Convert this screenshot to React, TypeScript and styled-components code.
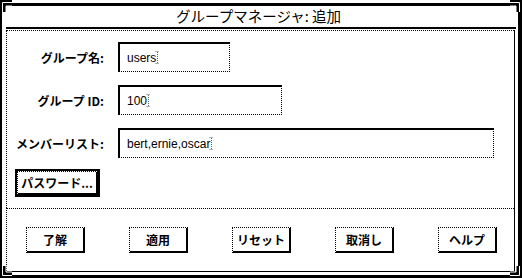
import React from 'react';
import styled, { createGlobalStyle } from 'styled-components';

const GlobalStyle = createGlobalStyle`
  html, body {
    margin: 0;
    padding: 0;
    background: #ffffff;
  }
  body {
    font-family: "Noto Sans CJK JP", "Liberation Sans", sans-serif;
    color: #000000;
  }
`;

const Window = styled.div`
  position: relative;
  width: 522px;
  height: 278px;
  box-sizing: border-box;
  padding-top: 3px;
  background: #ffffff;
`;

const Frame = styled.div`
  height: 100%;
  box-sizing: border-box;
  border-style: solid;
  border-color: #000;
  border-width: 3px 4px 3px 2px;
  padding: 0 3px 3px 4px;
  display: flex;
  flex-direction: column;
`;

const TitleBar = styled.div`
  height: 21px;
  display: flex;
  align-items: center;
  justify-content: center;
  font-size: 14.5px;
  line-height: 1;
  padding-right: 4px;
`;

const TitleRule = styled.div`
  height: 2px;
  background: #000;
  margin: 0 -1px 1px 0;
`;

const Panels = styled.div`
  flex: 1;
  display: flex;
  flex-direction: column;
  border-right: 1px solid #000;
  border-bottom: 1px solid #000;
`;

const FormPanel = styled.div`
  height: 178px;
  box-sizing: border-box;
  border-top: 1px dotted #000;
  border-left: 1px dotted #000;
  padding-top: 11px;
`;

const FormGrid = styled.div`
  display: grid;
  grid-template-columns: 97px auto;
  grid-auto-rows: 30px;
  column-gap: 14px;
  row-gap: 13px;
  align-items: center;
`;

const Label = styled.div`
  justify-self: end;
  font-size: 12px;
  font-weight: 700;
  white-space: nowrap;
`;

const Field = styled.div<{ $w: number }>`
  width: ${p => p.$w}px;
  height: 30px;
  box-sizing: border-box;
  border-top: 2px solid #000;
  border-left: 2px solid #000;
  border-right: 1px dotted #000;
  border-bottom: 1px dotted #000;
  padding-left: 7px;
  display: flex;
  align-items: center;
  font-family: "Liberation Sans", sans-serif;
  font-size: 12px;
`;

const Button = styled.button`
  height: 26px;
  width: 59px;
  box-sizing: border-box;
  padding: 0;
  margin: 0;
  background: #fff;
  color: #000;
  border-top: 1px dotted #000;
  border-left: 1px dotted #000;
  border-right: 2px solid #000;
  border-bottom: 2px solid #000;
  border-radius: 0;
  font-family: "Noto Sans CJK JP", sans-serif;
  font-size: 12px;
  font-weight: 700;
  display: flex;
  align-items: center;
  justify-content: center;
`;

const DefaultButton = styled(Button)`
  width: 81px;
  height: 24px;
  margin: 13px 0 0 10px;
  box-shadow: 0 0 0 2px #000;
`;

const ButtonPanel = styled.div`
  flex: 1;
  border-top: 1px dotted #000;
  border-left: 1px dotted #000;
  display: flex;
  gap: 44px;
  padding: 18px 0 0 19px;
`;

const Corner = styled.svg<{ $rot: number }>`
  position: absolute;
  width: 12px;
  height: 12px;
  transform: rotate(${p => p.$rot}deg);
`;

const Caret = () => (
  <svg width="5" height="13" viewBox="0 0 5 13" style={{ marginLeft: -1 }}>
    <path d="M0.5 0.5h4M2.5 1v11M0.5 12.5h4" stroke="#666" strokeWidth="1" strokeDasharray="1 1" fill="none" />
  </svg>
);

const CornerHandle = ({ rot, style }: { rot: number; style: React.CSSProperties }) => (
  <Corner $rot={rot} style={style} viewBox="0 0 12 12">
    <path d="M0 0H12V6H6V12H0Z" fill="#000" />
    <path d="M2.5 12V2.5H12" stroke="#fff" strokeWidth="1" fill="none" />
    <path d="M6 12V6H12" stroke="#fff" strokeWidth="1" fill="none" />
  </Corner>
);

const rows = [
  { label: 'グループ名:', value: 'users', w: 112 },
  { label: 'グループ ID:', value: '100', w: 164 },
  { label: 'メンバーリスト:', value: 'bert,ernie,oscar', w: 376 },
];

const actions = ['了解', '適用', 'リセット', '取消し', 'ヘルプ'];

export default function App() {
  return (
    <>
      <GlobalStyle />
      <Window>
        <Frame>
          <TitleBar>グループマネージャ: 追加</TitleBar>
          <TitleRule />
          <Panels>
            <FormPanel>
              <FormGrid>
                {rows.map(r => (
                  <React.Fragment key={r.label}>
                    <Label>{r.label}</Label>
                    <Field $w={r.w}>
                      {r.value}
                      <Caret />
                    </Field>
                  </React.Fragment>
                ))}
              </FormGrid>
              <DefaultButton>パスワード...</DefaultButton>
            </FormPanel>
            <ButtonPanel>
              {actions.map(a => (
                <Button key={a}>{a}</Button>
              ))}
            </ButtonPanel>
          </Panels>
        </Frame>
        <CornerHandle rot={0} style={{ left: 0, top: 0 }} />
        <CornerHandle rot={90} style={{ right: 0, top: 0 }} />
        <CornerHandle rot={180} style={{ right: 0, bottom: 0 }} />
        <CornerHandle rot={270} style={{ left: 0, bottom: 0 }} />
      </Window>
    </>
  );
}
